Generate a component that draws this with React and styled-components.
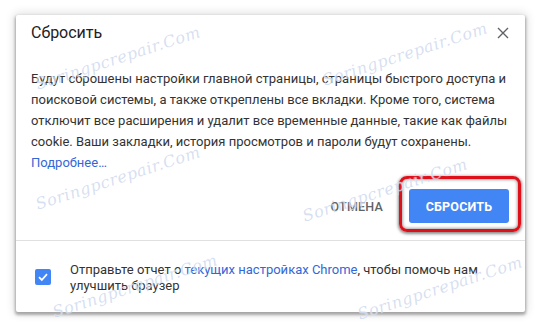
import React from 'react'
import styled, { createGlobalStyle } from 'styled-components'

const Global = createGlobalStyle`
  html, body {
    margin: 0;
    padding: 0;
    background: #ffffff;
  }
  body {
    font-family: Roboto, "Liberation Sans", Arial, sans-serif;
  }
`

const Page = styled.div`
  position: relative;
  width: 540px;
  height: 328px;
  overflow: hidden;
  background: #fff;
  padding: 15px 0 0 16px;
  box-sizing: border-box;
`

const Dialog = styled.div`
  width: 509px;
  height: 297px;
  background: #fff;
  border-radius: 2px;
  box-shadow: 0 2px 3px 1px rgba(0, 0, 0, 0.3), 0 0 10px 2px rgba(0, 0, 0, 0.12);
  display: flex;
  flex-direction: column;
  box-sizing: border-box;
`

const Header = styled.div`
  display: flex;
  align-items: center;
  justify-content: space-between;
  padding: 8px 14px 0 15px;
  height: 20px;
`

const Title = styled.div`
  font-size: 16px;
  line-height: 20px;
  color: #202124;
`

const Close = styled.button`
  border: 0;
  background: transparent;
  padding: 0;
  width: 16px;
  height: 16px;
  display: flex;
  align-items: center;
  justify-content: center;
  cursor: pointer;
`

const Body = styled.div`
  padding: 25px 15px 0 15px;
  font-size: 13px;
  line-height: 21px;
  color: #333;
  white-space: nowrap;
`

const Link = styled.a`
  color: #3367d6;
  text-decoration: none;
  display: inline-block;
`

const Actions = styled.div`
  display: flex;
  justify-content: flex-end;
  align-items: center;
  padding: 0 16px 0 0;
  margin-top: 16px;
  height: 34px;
`

const Button = styled.button`
  border: 0;
  border-radius: 3px;
  height: 34px;
  font-family: Roboto, "Liberation Sans", Arial, sans-serif;
  font-size: 12.5px;
  font-weight: ${(p) => (p.primary ? 700 : 500)};
  letter-spacing: 0.2px;
  color: ${(p) => (p.primary ? '#fff' : '#5f6368')};
  background: ${(p) => (p.primary ? '#4285f4' : 'transparent')};
  width: ${(p) => (p.primary ? '100px' : 'auto')};
  padding: ${(p) => (p.primary ? '0' : '0 16px')};
  margin-right: ${(p) => (p.primary ? '0' : '10px')};
  cursor: pointer;
`

const Highlight = styled.div`
  position: relative;
  display: flex;

  &::after {
    content: '';
    position: absolute;
    top: -13px;
    bottom: -9px;
    left: -10px;
    right: -12px;
    border: 3px solid #e0101a;
    border-radius: 8px;
    box-shadow: 0 1px 3px 1px rgba(0, 0, 0, 0.45), inset 0 0 3px 1px rgba(0, 0, 0, 0.35);
    pointer-events: none;
  }
`

const Divider = styled.div`
  margin-top: 17px;
  height: 1px;
  background: #e0e0e0;
`

const Footer = styled.div`
  flex: 1;
  display: flex;
  align-items: center;
  padding: 0 0 0 19px;
  gap: 19px;
`

const Check = styled.div`
  width: 16px;
  height: 16px;
  border-radius: 2px;
  background: #4285f4;
  display: flex;
  align-items: center;
  justify-content: center;
  flex-shrink: 0;
`

const FooterText = styled.div`
  font-size: 13px;
  line-height: 16px;
  color: #333;
  white-space: nowrap;
  margin-top: 2px;
`

const Mark = styled.div`
  position: absolute;
  left: ${(p) => p.x}px;
  top: ${(p) => p.y}px;
  transform: translate(-50%, -50%) rotate(-18deg);
  font-family: "DejaVu Serif", "Liberation Serif", serif;
  font-style: italic;
  font-size: 16px;
  letter-spacing: 0.5px;
  color: rgba(165, 185, 225, 0.45);
  text-shadow: 0 0 1px rgba(255, 255, 255, 0.9);
  white-space: nowrap;
  pointer-events: none;
`

const marks = [
  [118, 58],
  [405, 54],
  [118, 178],
  [385, 190],
  [440, 288],
  [135, 286],
]

export default function App() {
  return (
    <>
      <Global />
      <Page>
        <Dialog>
          <Header>
            <Title>Сбросить</Title>
            <Close aria-label="Закрыть">
              <svg width="12" height="12" viewBox="0 0 12 12">
                <path d="M1 1L11 11M11 1L1 11" stroke="#5f6368" strokeWidth="1.4" fill="none" />
              </svg>
            </Close>
          </Header>
          <Body>
            Будут сброшены настройки главной страницы, страницы быстрого доступа и
            <br />
            поисковой системы, а также откреплены все вкладки. Кроме того, система
            <br />
            отключит все расширения и удалит все временные данные, такие как файлы
            <br />
            cookie. Ваши закладки, история просмотров и пароли будут сохранены.
            <br />
            <Link href="#">Подробнее…</Link>
          </Body>
          <Actions>
            <Button>ОТМЕНА</Button>
            <Highlight>
              <Button primary>СБРОСИТЬ</Button>
            </Highlight>
          </Actions>
          <Divider />
          <Footer>
            <Check>
              <svg width="12" height="12" viewBox="0 0 12 12">
                <path d="M2 6.2L4.8 9L10 3.2" stroke="#fff" strokeWidth="1.8" fill="none" />
              </svg>
            </Check>
            <FooterText>
              Отправьте отчет о <Link href="#">текущих настройках Chrome</Link>, чтобы помочь нам
              <br />
              улучшить браузер
            </FooterText>
          </Footer>
        </Dialog>
        {marks.map(([x, y], i) => (
          <Mark key={i} x={x} y={y}>Soringpcrepair.Com</Mark>
        ))}
      </Page>
    </>
  )
}
